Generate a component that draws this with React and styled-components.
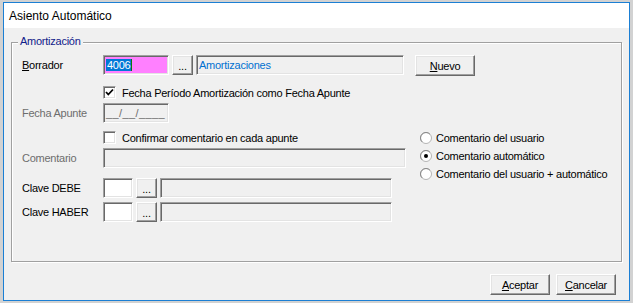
import React from "react";
import styled, { createGlobalStyle } from "styled-components";

const GlobalStyle = createGlobalStyle`
  html, body {
    margin: 0;
    padding: 0;
    background: #c8c8c8;
  }
  #root {
    width: 633px;
    height: 303px;
    overflow: hidden;
  }
  * {
    box-sizing: border-box;
  }
`;

const sunken = `
  border-top: 1px solid #a0a0a0;
  border-left: 1px solid #a0a0a0;
  border-bottom: 1px solid #ffffff;
  border-right: 1px solid #ffffff;
  box-shadow: inset 1px 1px 0 #696969, inset -1px -1px 0 #e3e3e3;
`;

function Radio({ checked, children }) {
  return (
    <RadioRow>
      <svg width="12" height="12" viewBox="0 0 12 12">
        <circle cx="6" cy="6" r="5.5" fill="#fff" stroke="#b4b4b4" />
        <path d="M2.1 9.9 A5.5 5.5 0 0 1 9.9 2.1" stroke="#8a8a8a" fill="none" />
        {checked && <circle cx="6" cy="6" r="2" fill="#000" />}
      </svg>
      <span>{children}</span>
    </RadioRow>
  );
}

function Check({ checked, children, $mt }) {
  return (
    <CheckRow $mt={$mt}>
      <Box>
        {checked && (
          <svg width="11" height="11" viewBox="0 0 11 11">
            <path d="M2 5 L4.3 7.5 L9 2.5" stroke="#000" strokeWidth="1.8" fill="none" />
          </svg>
        )}
      </Box>
      <span>{children}</span>
    </CheckRow>
  );
}

export default function App() {
  return (
    <Page>
      <GlobalStyle />
      <Window>
        <TitleBar>Asiento Automático</TitleBar>
        <Body>
          <GroupBox>
            <Caption>Amortización</Caption>

            <Row>
              <Label>
                <u>B</u>orrador
              </Label>
              <Field $w={66} $bg="#ff80ff">
                <Selected>4006</Selected>
                <Caret />
              </Field>
              <DotsButton>...</DotsButton>
              <Field $w={208} $color="#0070d0">
                Amortizaciones
              </Field>
              <Button $w={60} $ml={8}>
                <u>N</u>uevo
              </Button>
            </Row>

            <Check checked $mt={10}>
              Fecha Período Amortización como Fecha Apunte
            </Check>

            <Row $mt={4}>
              <Label $disabled>Fecha Apunte</Label>
              <Field $w={66} $color="#6d6d6d" $spacing={0.4}>
                __/__/____
              </Field>
            </Row>

            <Split>
              <LeftCol>
                <Check>Confirmar comentario en cada apunte</Check>
                <Row $mt={4}>
                  <Label $disabled>Comentario</Label>
                  <Field $w={303} />
                </Row>
                <Row $mt={10}>
                  <Label>Clave DEBE</Label>
                  <Field $w={30} $bg="#fff" />
                  <DotsButton>...</DotsButton>
                  <Field $w={232} />
                </Row>
                <Row $mt={4}>
                  <Label>Clave HABER</Label>
                  <Field $w={30} $bg="#fff" />
                  <DotsButton>...</DotsButton>
                  <Field $w={232} />
                </Row>
              </LeftCol>
              <RadioCol>
                <Radio>Comentario del usuario</Radio>
                <Radio checked>Comentario automático</Radio>
                <Radio>Comentario del usuario + automático</Radio>
              </RadioCol>
            </Split>
          </GroupBox>

          <Footer>
            <Button $w={60} $h={21}>
              <u>A</u>ceptar
            </Button>
            <Button $w={60} $h={21}>
              <u>C</u>ancelar
            </Button>
          </Footer>
        </Body>
      </Window>
    </Page>
  );
}

const Page = styled.div`
  width: 633px;
  height: 303px;
  padding: 2px 0 0 3px;
  background: #d2d2d2;
  font-family: "Liberation Sans", Arial, sans-serif;
  font-size: 11px;
  letter-spacing: -0.25px;
  color: #000;
`;

const Window = styled.div`
  width: 627px;
  height: 299px;
  border: 1px solid #1b7fd4;
  background: #f0f0f0;
  display: flex;
  flex-direction: column;
`;

const TitleBar = styled.div`
  height: 25px;
  flex: none;
  background: #fff;
  display: flex;
  align-items: center;
  padding-left: 5px;
  font-size: 12px;
  letter-spacing: 0;
`;

const Body = styled.div`
  flex: 1;
  display: flex;
  flex-direction: column;
  padding: 14px 13px 0 7px;
`;

const GroupBox = styled.div`
  position: relative;
  width: 611px;
  height: 220px;
  border: 1px solid #a0a0a0;
  box-shadow: 1px 1px 0 #fff, inset 1px 1px 0 #fff;
  padding: 12px 0 0 10px;
`;

const Caption = styled.span`
  position: absolute;
  top: -8px;
  left: 6px;
  padding: 0 2px;
  line-height: 13px;
  background: #f0f0f0;
  color: #10208a;
`;

const Row = styled.div`
  display: flex;
  align-items: flex-start;
  gap: 3px;
  margin-top: ${(p) => p.$mt || 0}px;
`;

const Label = styled.div`
  width: 78px;
  height: 20px;
  line-height: 20px;
  white-space: nowrap;
  color: ${(p) => (p.$disabled ? "#6d6d6d" : "#000")};
  u {
    text-decoration-thickness: 1px;
  }
`;

const Field = styled.div`
  ${sunken}
  width: ${(p) => p.$w}px;
  height: 20px;
  flex: none;
  background: ${(p) => p.$bg || "#f0f0f0"};
  color: ${(p) => p.$color || "#000"};
  letter-spacing: ${(p) => (p.$spacing != null ? p.$spacing : -0.25)}px;
  padding: 0 2px;
  line-height: 18px;
  white-space: nowrap;
  overflow: hidden;
  display: flex;
  align-items: center;
`;

const Selected = styled.span`
  background: #0078d7;
  color: #fff;
  line-height: 12px;
  padding: 0 1px;
`;

const Caret = styled.span`
  width: 1px;
  height: 12px;
  background: #0a7a10;
`;

const Button = styled.div`
  width: ${(p) => p.$w}px;
  height: ${(p) => p.$h || 21}px;
  margin-left: ${(p) => p.$ml || 0}px;
  flex: none;
  border-top: 1px solid #fff;
  border-left: 1px solid #fff;
  border-right: 1px solid #696969;
  border-bottom: 1px solid #696969;
  box-shadow: inset -1px -1px 0 #a0a0a0, inset 1px 1px 0 #e3e3e3;
  background: #f0f0f0;
  display: flex;
  align-items: center;
  justify-content: center;
  u {
    text-decoration-thickness: 1px;
  }
`;

const DotsButton = styled(Button)`
  width: 21px;
  height: 20px;
  padding-bottom: 2px;
  align-items: flex-end;
`;

const CheckRow = styled.div`
  display: flex;
  align-items: center;
  height: 13px;
  padding-left: 81px;
  gap: 6px;
  margin-top: ${(p) => p.$mt || 0}px;
  white-space: nowrap;
`;

const Box = styled.div`
  ${sunken}
  width: 13px;
  height: 13px;
  background: #fff;
  display: flex;
  align-items: center;
  justify-content: center;
`;

const Split = styled.div`
  display: flex;
  margin-top: 8px;
`;

const LeftCol = styled.div`
  width: 384px;
  display: flex;
  flex-direction: column;
`;

const RadioCol = styled.div`
  margin-left: 14px;
  display: flex;
  flex-direction: column;
  gap: 5px;
`;

const RadioRow = styled.div`
  display: flex;
  align-items: center;
  height: 13px;
  gap: 4px;
  white-space: nowrap;
`;

const Footer = styled.div`
  display: flex;
  justify-content: flex-end;
  gap: 6px;
  margin-top: 12px;
`;
